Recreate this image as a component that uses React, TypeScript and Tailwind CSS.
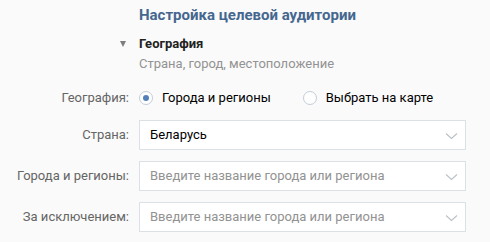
const font = { fontFamily: "Roboto, 'Open Sans', sans-serif" };

function Radio({ checked, label }: { checked?: boolean; label: string }) {
  return (
    <label className="flex items-center gap-[9px] cursor-pointer">
      <span className="w-[14px] h-[14px] rounded-full border border-[#c3cdd8] bg-white flex items-center justify-center">
        {checked && <span className="w-[6px] h-[6px] rounded-full bg-[#5181b8]" />}
      </span>
      <span className="text-[13px] text-[#000]">{label}</span>
    </label>
  );
}

function Select({ value, placeholder }: { value?: string; placeholder: string }) {
  return (
    <div className="w-[327px] h-[30px] bg-white border border-[#dce1e6] flex items-center justify-between pl-[10px] pr-[7px]">
      <span className={`text-[13px] ${value ? "text-[#000]" : "text-[#929292]"}`}>{value ?? placeholder}</span>
      <svg width="13" height="8" viewBox="0 0 13 8" fill="none" className="mt-[1px]">
        <path d="M1 1.5l5.5 5 5.5-5" stroke="#bcc1c6" strokeWidth="1.1" />
      </svg>
    </div>
  );
}

export default function App() {
  const rows: [string, string | undefined][] = [
    ["Страна:", "Беларусь"],
    ["Города и регионы:", undefined],
    ["За исключением:", undefined],
  ];

  return (
    <div className="w-[490px] h-[242px] bg-[#fafafa] overflow-hidden" style={font}>
      <div className="pl-[139px] pt-[6px]">
        <h2 className="text-[15px] font-bold text-[#45678f] leading-[18px]">Настройка целевой аудитории</h2>
        <div className="relative mt-[12px]">
          <span className="absolute left-[-19px] top-[5px] w-0 h-0 border-l-[3.5px] border-r-[3.5px] border-t-[6px] border-l-transparent border-r-transparent border-t-[#7d7d7d]" />
          <p className="text-[13px] font-bold text-[#222] leading-[16px]">География</p>
        </div>
        <p className="mt-[4px] text-[13px] text-[#939393] leading-[16px]">Страна, город, местоположение</p>
      </div>

      <div className="grid grid-cols-[129px_1fr] gap-x-[10px] mt-[16px] items-center">
        <span className="text-[13px] text-[#656565] text-right">География:</span>
        <div className="flex items-center h-[20px]">
          <Radio checked label="Города и регионы" />
          <div className="ml-[32px]">
            <Radio label="Выбрать на карте" />
          </div>
        </div>
      </div>

      <div className="grid grid-cols-[129px_1fr] gap-x-[10px] gap-y-[11px] mt-[12px] items-center">
        {rows.map(([label, value]) => (
          <div key={label} className="contents">
            <span className="text-[13px] text-[#656565] text-right">{label}</span>
            <Select value={value} placeholder="Введите название города или региона" />
          </div>
        ))}
      </div>
    </div>
  );
}
